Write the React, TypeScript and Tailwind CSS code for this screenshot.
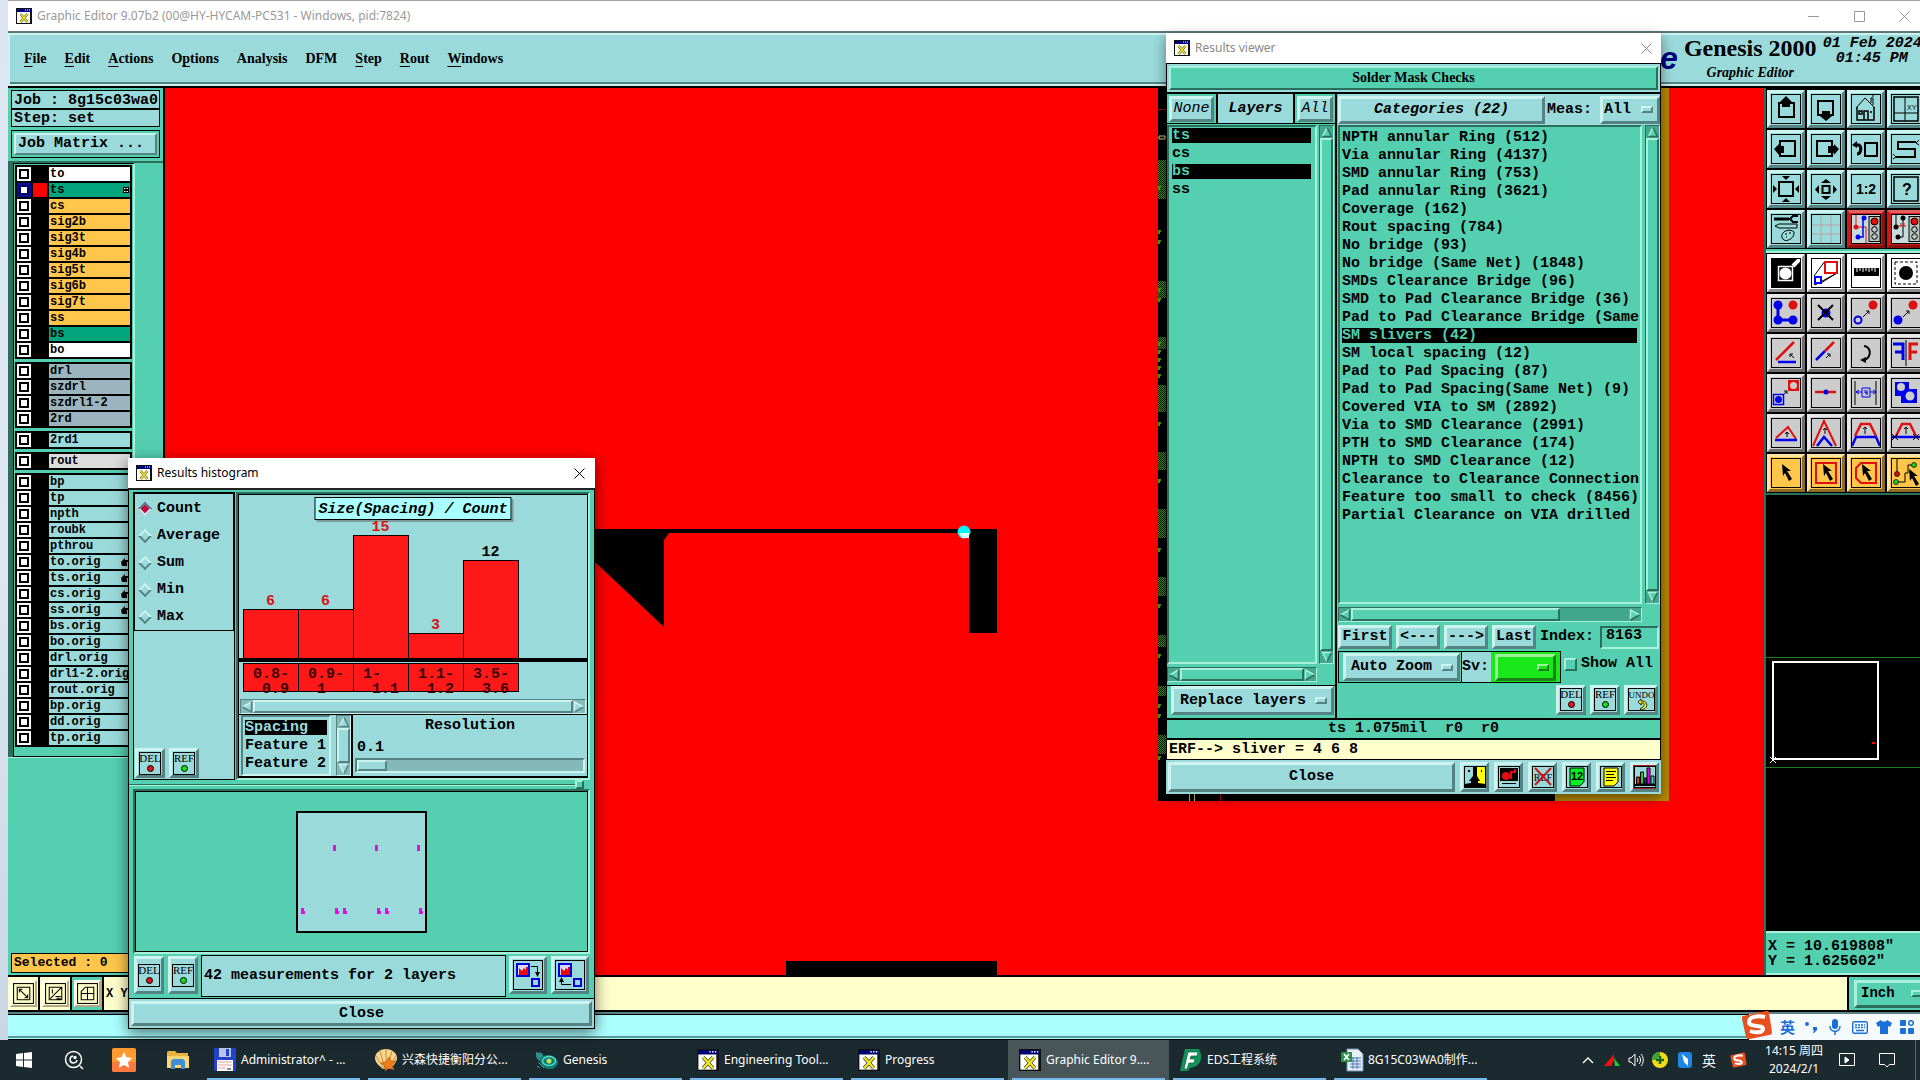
import React from "react";

const mono = "font-['Liberation_Mono',monospace] font-bold text-[15px] leading-[18px]";
const serif = "font-['Liberation_Serif',serif] font-bold text-[14px]";
const ui = "font-['Noto_Sans','Noto_Sans_CJK_SC',sans-serif] text-[12px]";

const cyanUp = "bg-[#9bdada] border-t-[#cdf3f1] border-l-[#cdf3f1] border-b-[#558384] border-r-[#558384]";
const tealUp = "bg-[#54cfb0] border-t-[#a8f0dc] border-l-[#a8f0dc] border-b-[#2c6e5c] border-r-[#2c6e5c]";
const cyanDown = "border-t-[#558384] border-l-[#558384] border-b-[#cdf3f1] border-r-[#cdf3f1]";
const tealDown = "border-t-[#2c6e5c] border-l-[#2c6e5c] border-b-[#a8f0dc] border-r-[#a8f0dc]";

function XIcon({ className = "size-4" }: { className?: string }) {
  return (
    <svg viewBox="0 0 16 16" className={className} aria-hidden="true">
      <rect width="16" height="16" fill="#111" />
      <rect x="1" y="1" width="14" height="3" fill="#00007f" />
      <path d="M9 2h1M11 2h1M13 2h1" stroke="#fff" />
      <rect x="1" y="4" width="13" height="11" fill="#fff" />
      <path d="M4.500 6l7 8M11.500 6l-7 8" stroke="#333" strokeWidth="2.600" />
      <path d="M4.500 6l7 8M11.500 6l-7 8" stroke="#f2ea1c" strokeWidth="1.700" />
    </svg>
  );
}

function Arrow({ dir, teal }: { dir: "l" | "r" | "u" | "d"; teal?: boolean }) {
  const lt = teal ? "#a8f0dc" : "#cdf3f1";
  const dk = teal ? "#2c6e5c" : "#558384";
  const fill = teal ? "#54cfb0" : "#9bdada";
  const shapes = {
    l: ["M10.500 1L1.500 6", "M1.500 6L10.500 11V1"],
    r: ["M10.500 6L1.500 1V11", "M1.500 11L10.500 6"],
    u: ["M1.500 10.500L6 1.500", "M6 1.500L10.500 10.500H1.500"],
    d: ["M6 10.500L1.500 1.500H10.500", "M10.500 1.500L6 10.500"],
  }[dir];
  const full = { l: "M10.500 1L1.500 6L10.500 11z", r: "M1.500 1L10.500 6L1.500 11z", u: "M6 1.500L10.500 10.500H1.500z", d: "M1.500 1.500H10.500L6 10.500z" }[dir];
  return (
    <svg viewBox="0 0 12 12" className="size-3 shrink-0" aria-hidden="true">
      <path d={full} fill={fill} />
      <path d={shapes[0]} stroke={lt} strokeWidth="1.500" fill="none" />
      <path d={shapes[1]} stroke={dk} strokeWidth="1.500" fill="none" />
    </svg>
  );
}

function HScroll({ teal, part }: { teal?: boolean; part?: boolean }) {
  return (
    <div className={`flex h-[15px] items-center border ${teal ? "bg-[#43a78e] " + tealDown : "bg-[#84b9b9] " + cyanDown}`}>
      <Arrow dir="l" teal={teal} />
      <div className="flex h-[13px] flex-1">
        <div className={`border-2 ${part ? "w-3/4" : "w-full"} ${teal ? tealUp : cyanUp}`} />
      </div>
      <Arrow dir="r" teal={teal} />
    </div>
  );
}

function VScroll({ teal }: { teal?: boolean }) {
  return (
    <div className={`flex w-[15px] shrink-0 flex-col items-center border ${teal ? "bg-[#43a78e] " + tealDown : "bg-[#84b9b9] " + cyanDown}`}>
      <Arrow dir="u" teal={teal} />
      <div className={`w-[13px] flex-1 border-2 ${teal ? tealUp : cyanUp}`} />
      <Arrow dir="d" teal={teal} />
    </div>
  );
}

function Btn({ children, className = "" }: { children: React.ReactNode; className?: string }) {
  return (
    <button type="button" className={`flex items-center justify-center border-[3px] ${cyanUp} ${className}`}>
      {children}
    </button>
  );
}

function Tag({ label, kind }: { label: string; kind: "del" | "ref" | "undo" }) {
  const w = kind === "undo" ? 27 : 22;
  return (
    <svg width={w} height="23" viewBox={`0 0 ${w} 23`} aria-hidden="true">
      <rect x="0.500" y="0.500" width={w - 1} height="22" fill="none" stroke="#000" />
      <text x={w / 2} y="10" textAnchor="middle" fontFamily="Liberation Serif" fontWeight="normal" fontSize={kind === "undo" ? 9 : 11}>{label}</text>
      {kind === "undo" ? (
        <path d="M13 11l-3 3 3 3v-2c3-1 4 2 2 4l-3 2 1 1c5-1 7-4 5-7-1-2-3-2-5-2z" fill="#f5ee20" stroke="#000" strokeWidth="0.800" />
      ) : (
        <circle cx={w / 2 + 0.500} cy="16.500" r="3" fill={kind === "del" ? "#e31414" : "#18e018"} stroke="#000" />
      )}
    </svg>
  );
}

function Option({ label, children, tone = cyanUp, className = "" }: { label: string; children?: string; tone?: string; className?: string }) {
  return (
    <div className={`flex items-center border-[3px] ${tone} ${className}`}>
      <select aria-label={label} className="min-w-0 flex-1 appearance-none bg-transparent outline-none">
        <option>{children}</option>
      </select>
      <span className={`mr-1 h-[7px] w-3 shrink-0 border-2 ${tone}`} />
    </div>
  );
}

/* ---------- main window ---------- */

const menus: [string, string, string][] = [
  ["", "F", "ile"], ["", "E", "dit"], ["", "A", "ctions"], ["O", "p", "tions"], ["Analysis", "", ""],
  ["DFM", "", ""], ["", "S", "tep"], ["", "R", "out"], ["", "W", "indows"],
];

type Layer = { n: string; c: string; sel?: boolean; hand?: boolean };
const W = "bg-white", G = "bg-[#02a57c]", O = "bg-[#ffc64b]", S = "bg-[#9bb4bd]", C = "bg-[#9bdada]";
const groups: Layer[][] = [
  [
    { n: "to", c: W }, { n: "ts", c: G, sel: true }, { n: "cs", c: O }, { n: "sig2b", c: O }, { n: "sig3t", c: O },
    { n: "sig4b", c: O }, { n: "sig5t", c: O }, { n: "sig6b", c: O }, { n: "sig7t", c: O }, { n: "ss", c: O },
    { n: "bs", c: G }, { n: "bo", c: W },
  ],
  [{ n: "drl", c: S }, { n: "szdrl", c: S }, { n: "szdrl1-2", c: S }, { n: "2rd", c: S }],
  [{ n: "2rd1", c: C }],
  [{ n: "rout", c: "bg-[#dcdcdc]" }],
  [
    { n: "bp", c: C }, { n: "tp", c: C }, { n: "npth", c: C }, { n: "roubk", c: C }, { n: "pthrou", c: C },
    { n: "to.orig", c: C, hand: true }, { n: "ts.orig", c: C, hand: true }, { n: "cs.orig", c: C, hand: true },
    { n: "ss.orig", c: C, hand: true }, { n: "bs.orig", c: C }, { n: "bo.orig", c: C }, { n: "drl.orig", c: C },
    { n: "drl1-2.orig", c: C }, { n: "rout.orig", c: C }, { n: "bp.orig", c: C }, { n: "dd.orig", c: C }, { n: "tp.orig", c: C },
  ],
];

function LayerRow({ l }: { l: Layer }) {
  return (
    <li className="flex h-[14px]">
      <button type="button" aria-label={`Display ${l.n}`} className={`flex w-[14px] items-center justify-center ${l.sel ? "bg-[#0a0a9c]" : "bg-white"}`}>
        <span className={`size-[10px] border-2 bg-white ${l.sel ? "border-[#000060]" : "border-black"}`} />
      </button>
      <span className={`mx-[2px] w-[14px] ${l.sel ? "bg-[#ff0000]" : "bg-black"}`} />
      <button type="button" className={`flex w-[81px] items-center overflow-hidden pl-px text-left font-['Liberation_Mono',monospace] text-[12px] leading-[14px] font-bold ${l.c}`}>
        <span>{l.n}</span>
        {l.sel && (
          <svg viewBox="0 0 6 6" className="mr-px ml-auto size-[6px] shrink-0"><rect width="6" height="6" /><path d="M1 1.500h1.500M3.500 1.500h1.500M1 4.500h1.500M3.500 4.500h1.500" stroke="#fff" /></svg>
        )}
        {l.hand && (
          <svg viewBox="0 0 9 8" className="ml-auto h-2 w-[9px] shrink-0"><path d="M0 4l4-4v2h5v2H6v4H1z" /></svg>
        )}
      </button>
    </li>
  );
}

function LeftPanel() {
  return (
    <aside className="flex w-[157px] shrink-0 flex-col border-r-2 border-black bg-[#54cfb0]">
      <div className={`mx-[3px] mt-[2px] ${mono}`}>
        <div className="h-[19px] border border-black bg-[#9bdada] pl-[2px] leading-[19px]">Job : 8g15c03wa0</div>
        <div className="h-[18px] border border-black bg-[#9bdada] pl-[2px] leading-[18px]">Step: set</div>
        <div className="mt-[3px] border border-black p-[2px]">
          <button type="button" className={`h-[22px] w-full border-2 pl-[2px] text-left leading-[16px] ${cyanUp}`}>Job Matrix ...</button>
        </div>
      </div>
      <div className="mt-[3px] flex border-t-2 border-l-[5px] border-[#2c6e5c]">
        <div className="border border-r-2 border-black border-r-[#a8f0dc] p-px pb-[9px]">
          <div className="flex flex-col gap-[3px]">
            {groups.map((g, i) => (
              <ul key={i} className="flex w-[117px] flex-col gap-[2px] bg-black p-[2px]">
                {g.map((l) => <LayerRow key={l.n} l={l} />)}
              </ul>
            ))}
          </div>
        </div>
      </div>
      <div className="h-px bg-[#a8f0dc]" />
      <div className="mx-[3px] mt-auto mb-[2px] h-5 border border-black bg-[#ffc64b] pl-[2px] font-['Liberation_Mono',monospace] text-[13px] leading-[17px] font-bold">Selected : 0</div>
    </aside>
  );
}

const weave: [number, number][] = [[72, 39], [193, 17], [249, 12], [297, 27], [364, 18], [421, 29], [489, 19], [547, 12], [598, 10], [647, 19]];
const marks = [98, 142, 152, 200, 210, 254, 262, 270, 278, 286, 334, 391, 460, 516, 566, 616, 626, 668];

function Canvas() {
  return (
    <main className="min-w-0 flex-1 overflow-hidden bg-[#ff0000]">
      <svg className="block size-full" aria-label="Board view">
        <defs>
          <pattern id="weave" width="2" height="2" patternUnits="userSpaceOnUse">
            <rect width="2" height="2" fill="#0a1c04" />
            <path d="M0 0h1v1H0zM1 1h1v1H1z" fill="#4c8a1c" />
          </pattern>
        </defs>
        <path d="M430 441h402v4H504l-5 7v87L430 474z" />
        <path d="M804 441h28v104h-28z" />
        <circle cx="799" cy="444" r="6.500" fill="#00f4f4" />
        <path d="M794 445h10v5h-7z" fill="#d8ffff" />
        <path d="M621 873h211v14H621z" />
        <path d="M993 0h511v713H993z" />
        <path d="M1496 0h8v713h-114v-9h106z" fill="#b58900" />
        {weave.map(([y, h]) => <rect key={y} x="993" y={y} width="8" height={h} fill="url(#weave)" />)}
        {marks.map((y) => <path key={y} d={`M993 ${y}h3v2h-1v2h-2z`} fill="#4c9a10" />)}
        <path d="M993 21.500h8" stroke="#a00" />
        <path d="M994 48h6v3h-6z" stroke="#d8d070" fill="none" />
        <path d="M1024.500 704v9M1029.500 704v9" stroke="#d8d070" />
        <path d="M1055.500 704v9" stroke="#b00" />
      </svg>
    </main>
  );
}

/* toolbar glyphs are drawn on a 30 x 30 grid */
const K = "#000", R = "#e01010", B = "#0000ee";
const p = (d: string, stroke = K, w = 2, fill = "none") => <path key={d + stroke} d={d} stroke={stroke} strokeWidth={w} fill={fill} />;
const f = (d: string, fill = K) => <path key={d + fill} d={d} fill={fill} />;
const arrowCur = (x: number, y: number) => <path d={`M${x} ${y}l9 7h-4l5 8-3 2-4-8-2 3z`} />;
const light = (wires: React.ReactNode) => (
  <>
    <rect x="1" y="1" width="28" height="28" fill="#c6dcdc" />
    {wires}
    <rect x="18" y="2.500" width="11" height="25" fill="#b8c4c0" stroke="#000" />
    <circle cx="23.500" cy="7.500" r="3.500" fill="#e01010" stroke="#000" />
    <circle cx="23.500" cy="15.500" r="2.800" fill="none" stroke="#000" />
    <circle cx="23.500" cy="22.500" r="2.800" fill="none" stroke="#000" />
  </>
);

const glyphs1: React.ReactNode[] = [
  <>{p("M8 9h15v14H8z")}{f("M15 2l6 6h-2v5h-8V8H9z")}</>,
  <>{p("M7 7h15v14H7z")}{f("M15 27l6-5h-2v-5h-8v5H9z")}</>,
  <>{p("M6 13v13h17V13M13 26v-9h4v9M8 17h3v3H8zM19 18h2", K, 1.500)}{p("M5 14L14 4l10 10M20 9V4h2v7M21 2h2", K, 1)}</>,
  <>{p("M3 3h24v24H3z", K, 1.500)}{p("M14 3v24M3 19h24", K, 1)}<text x="16" y="16" fontSize="7" fontFamily="Liberation Sans">XY</text></>,
  <>{p("M9 7h15v15H9z")}{f("M3 15l5-5v2h5v7H8v2z")}</>,
  <>{p("M6 7h15v15H6z")}{f("M28 15l-5-5v2h-6v7h6v2z")}</>,
  <>{p("M14 9h12v13H14z")}{p("M4 11h4c3 2 2 9-2 9", K, 3)}{f("M1 11l5-4v7z")}</>,
  <>{p("M25 8H7v7h17v8H5")}{p("M28 6l-3 3 3 2M2 20l3 3-3 2", K, 1)}</>,
  <>{p("M8 8h14v14H8z")}{f("M11 2h8l-4 4zM11 28h8l-4-4zM2 11v8l4-4zM28 11v8l-4-4z")}</>,
  <>{p("M11.500 12h7v7h-7z")}{f("M10 9h10l-5-4zM10 22h10l-5 4zM8 11v9l-4-4.500zM22 11v9l4-4.500z")}</>,
  <text x="15" y="20" textAnchor="middle" fontSize="14" fontWeight="bold" fontFamily="Liberation Sans">1:2</text>,
  <>{p("M3 3h24v24H3z", K, 1.500)}<text x="16" y="21" textAnchor="middle" fontSize="16" fontWeight="bold" fontFamily="Liberation Sans">?</text></>,
  <>{p("M3 5h15", K, 3)}{p("M27 2h-5l-3 3 3 3h5", K, 2)}{p("M4 12l4-2h18v4H8z", K, 1)}{p("M11 24c-2-7 8-10 12-6 1 6-7 10-10 8zM14 20h2M18 19h2M15 23h1", K, 1)}</>,
  <>{p("M10 1v28M20 1v28M1 11h28M1 20h28", "#b9a0a4", 1)}</>,
  light(<>{p("M5 1v12h10v16", R, 1)}{p("M12 4v19H7", B, 1.500)}<circle cx="5" cy="13" r="2.500" fill={R} /><circle cx="13" cy="4" r="2.500" fill={B} /><circle cx="7" cy="23" r="2.500" fill={B} /></>),
  light(<>{p("M5 1v12M12 4v19H7", K, 1)}{p("M7 12h8M10 9v3M13 9v3", R, 1)}<circle cx="5" cy="13" r="2.500" /><circle cx="12" cy="4" r="2.500" /><circle cx="7" cy="23" r="2.500" /></>),
];

const glyphs2: React.ReactNode[] = [
  <>{f("M1 1h28v28H1z")}{p("M22 8l7-7", "#fff", 4)}{p("M7.500 8.500h14v14h-14z", "#fff", 1.500)}<circle cx="14.500" cy="15.500" r="6" fill="#fff" /></>,
  <>{p("M3 18L14 3M3 25l1 2 22-12M10 25l16-10", K, 1)}{p("M14 4h12v11H14z", R, 2)}{p("M4 19h6v6H4z", B, 2)}</>,
  <>{f("M3 10h25v8H3z")}{p("M6 10v4M9 10v3M12 10v4M15 10v3M18 10v4M21 10v3M24 10v4", "#fff", 1)}</>,
  <><rect x="4" y="4" width="22" height="22" fill="none" stroke="#000" strokeDasharray="3 2" /><circle cx="15" cy="15" r="7" /></>,
  <>{p("M7 7v15h15", B, 3)}<circle cx="7" cy="7" r="4.500" fill={B} /><circle cx="7" cy="22" r="4.500" fill={B} /><circle cx="22" cy="22" r="4.500" fill={B} /><circle cx="22" cy="7" r="4.500" fill={R} /></>,
  <><circle cx="15" cy="15" r="4.500" fill={B} />{p("M7 7l15 15M22 7L7 22")}</>,
  <>{p("M12 19l6-6M15 13h3v3", K, 1)}<circle cx="7" cy="22" r="3.500" fill="none" stroke={B} strokeWidth="2" /><circle cx="22" cy="7" r="4.500" fill={R} /></>,
  <>{p("M12 19l6-6M15 13h3v3", K, 1)}<circle cx="7" cy="22" r="4.500" fill={B} /><circle cx="22" cy="7" r="4.500" fill={R} /></>,
  <>{p("M5 22L23 4", R, 2.500)}{p("M7 24h18", B, 2.500)}{p("M23 20l-4-4M19 19v-3h3", K, 1)}</>,
  <>{p("M5 22l9-9", B, 2.500)}{p("M14 13l9-9", R, 2.500)}{p("M15 20l4-4M16 16h3v3", K, 1)}</>,
  <>{p("M13 8c7 1 8 10 1 14", K, 2)}{f("M9 22l6-3v6z")}</>,
  <>{p("M15 2v26", K, 1)}{p("M2 6h10v16M4 14h8", B, 3)}{p("M27 6h-8v16M26 14h-7", R, 3)}</>,
  <>{p("M2.500 16.500h10v10h-10z", B, 1.500)}<circle cx="7.500" cy="21.500" r="3.500" fill={B} />{f("M17 2h11v11H17z", R)}<circle cx="22.500" cy="7.500" r="3.500" fill="#ccc" />{p("M12 17l4-4M13 13h3v3", K, 1)}</>,
  <>{p("M4 14h21", R, 2.500)}<circle cx="15" cy="14" r="2.500" fill={B} /></>,
  <>{p("M4 3v24M25 3v24", K, 1)}{p("M11 10h8v9h-8zM5 14h6M19 14h6M8 12l-3 2 3 2M22 12l3 2-3 2M14 12v3h3M16 12v5", B, 1)}</>,
  <>{f("M4 4h14v7h8v14H10v-7H4z", B)}<circle cx="10" cy="9" r="4" fill="#ccc" /><circle cx="19" cy="18" r="4.500" fill="#ccc" /></>,
  <>{p("M5 20L17 9l8 12", R, 2)}{p("M4 22h22", B, 2.500)}{p("M16 19v-5M14 16l2-2 2 2", K, 1)}</>,
  <>{p("M2 28L13 3l12 25", R, 2)}{p("M6 28l7-9 8 9", B, 2.500)}{p("M14 16v-6M12 12l2-2 2 2", K, 1)}</>,
  <>{p("M4 18l6-12h9l6 12", R, 2.500)}{p("M1 28l4-9h20l4 9", B, 2.500)}{p("M14 16V9M12 11l2-2 2 2", K, 1)}</>,
  <>{p("M5 18l6-12h8l6 12", R, 2.500)}{p("M0 19h30", B, 2.500)}{p("M15 16V9M13 11l2-2 2 2M1 16l6 6M7 16l-6 6M22 16l6 6M28 16l-6 6", K, 1)}</>,
  <>{arrowCur(11, 6)}</>,
  <>{p("M5 5h20v20H5z", R, 2)}{arrowCur(12, 6)}</>,
  <>{p("M10 5h15v20H10l-5-5V10z", R, 2)}{arrowCur(11, 6)}</>,
  <>{p("M6 1v14M6 24h8v-9h3v-8h6", K, 1)}<circle cx="6" cy="16" r="2.500" fill="#d01010" stroke="#000" strokeWidth="0.700" /><circle cx="5" cy="24" r="2.500" fill="#20d020" stroke="#000" strokeWidth="0.700" /><circle cx="23" cy="7" r="2.500" fill="#20d020" stroke="#000" strokeWidth="0.700" />{arrowCur(18, 11)}</>,
];

function Tools({ items, tone, name }: { items: React.ReactNode[]; tone: (i: number) => string; name: string }) {
  return (
    <div className="grid grid-cols-[repeat(4,38px)] gap-[2px] bg-black p-px">
      {items.map((g, i) => (
        <button key={i} type="button" aria-label={`${name} tool ${i + 1}`} className={`flex size-[38px] items-center justify-center border-[3px] ${tone(i)}`}>
          <svg viewBox="0 0 30 30" className="size-[30px]" aria-hidden="true">
            {g}
            <rect x="0.500" y="0.500" width="29" height="29" fill="none" stroke="#000" />
          </svg>
        </button>
      ))}
    </div>
  );
}

const redTone = "bg-[#d01818] border-t-[#e06060] border-l-[#d01818] border-b-[#8a1010] border-r-[#8a1010]";
const whiteTone = "bg-white border-t-white border-l-white border-b-[#8c8c8c] border-r-[#8c8c8c]";
const grayTone = "bg-[#cccccc] border-t-[#e8e8e8] border-l-[#e8e8e8] border-b-[#6e6e6e] border-r-[#6e6e6e]";
const orangeTone = "bg-[#ffc64b] border-t-[#ffe6a8] border-l-[#ffe6a8] border-b-[#8d6c26] border-r-[#8d6c26]";

function RightPanel() {
  return (
    <aside className="flex w-[156px] shrink-0 flex-col overflow-hidden border-l-2 border-[#2c6e5c] bg-black">
      <div className="border-b-2 border-[#54cfb0] pt-px"><Tools items={glyphs1} name="View" tone={(i) => (i >= 14 ? redTone : cyanUp)} /></div>
      <div className="border-y-2 border-[#2c6e5c] border-t-[#a8f0dc]">
        <Tools items={glyphs2} name="Edit" tone={(i) => (i < 4 ? whiteTone : i < 20 ? grayTone : orangeTone)} />
      </div>
      <div className="flex flex-1 flex-col pt-[161px]">
        <svg width="156" height="114" viewBox="0 0 156 114" aria-label="Overview">
          <path d="M0 1.500h156M0 111.500h156" stroke="#1d7a1d" />
          <path d="M7 6h105v97H7z" fill="none" stroke="#fff" strokeWidth="2" />
          <path d="M106 87h3" stroke="#f00" strokeWidth="2" />
          <path d="M4 101l6 6M10 101l-6 6" stroke="#fff" />
        </svg>
      </div>
      <div className="border-y-2 border-[#a8f0dc] bg-[#54cfb0] pt-[6px] pb-[4px] pl-[2px] font-['Liberation_Mono',monospace] text-[15px] leading-[15px] font-bold whitespace-pre">
        <div>X = 10.619808"</div>
        <div>Y = 1.625602"</div>
      </div>
    </aside>
  );
}

const snaps = ["M5 5h12v12H5zM7 7l8 8M7 10V7h3M15 12v3h-3", "M5 5h12v12H5zM6 16L17 5M8 7v4M11 14h5M12 16h4", "M5 9l4-4h8v12H5zM11 5v12M5 11h12"];

function MainWindow() {
  return (
    <div className="flex min-w-0 flex-1 flex-col border-t border-[#a0a0a0]">
      <header className={`flex h-[30px] shrink-0 items-center bg-white pl-2 text-[#999] ${ui}`}>
        <XIcon />
        <h1 className="ml-[5px] flex-1">Graphic Editor 9.07b2 (00@HY-HYCAM-PC531 - Windows, pid:7824)</h1>
        <div className="flex w-[112px] justify-between pr-[10px]">
          <button type="button" aria-label="Minimize"><svg viewBox="0 0 11 11" className="size-[11px]"><path d="M0 5.500h11" stroke="#999" /></svg></button>
          <button type="button" aria-label="Maximize"><svg viewBox="0 0 11 11" className="size-[11px]"><path d="M.5.5h10v10H.5z" stroke="#999" fill="none" /></svg></button>
          <button type="button" aria-label="Close window"><svg viewBox="0 0 11 11" className="size-[11px]"><path d="M.5.5l10 10M10.500.5l-10 10" stroke="#999" /></svg></button>
        </div>
      </header>
      <div className="flex h-[57px] shrink-0 overflow-hidden border-t-2 border-b-2 border-t-[#5b7778] border-b-black bg-[#9bdada] shadow-[inset_0_-2px_0_#cdf3f1,inset_2px_2px_0_#cdf3f1,inset_0_-4px_0_#558384]">
        <nav className={`flex flex-1 items-center gap-[18px] pb-[3px] pl-[16px] text-black ${serif}`}>
          {menus.map(([a, b, c]) => (
            <button type="button" key={a + b + c}>{a}<span className="underline underline-offset-[3px]">{b}</span>{c}</button>
          ))}
        </nav>
        <div className="flex w-[268px] shrink-0 gap-1 overflow-hidden pl-2 font-bold text-black">
          <span className="w-5 pt-[5px] text-[32px] leading-[40px] text-[#00007f] italic font-['Liberation_Sans',sans-serif]">e</span>
          <div className="w-[137px] shrink-0 pt-[2px] text-center font-['Liberation_Serif',serif]">
            <div className="text-[24px] leading-[26px] whitespace-nowrap">Genesis 2000</div>
            <div className="text-[14px] leading-[24px] italic">Graphic Editor</div>
          </div>
          <div className="pt-[3px] text-[15px] leading-[15px] whitespace-pre italic font-['Liberation_Mono',monospace]">
            <div>01 Feb 2024</div>
            <div className="pl-[13px]">01:45 PM</div>
          </div>
        </div>
      </div>
      <div className="flex min-h-0 flex-1">
        <LeftPanel />
        <Canvas />
        <RightPanel />
      </div>
      <div className="flex h-[37px] shrink-0 border-y-2 border-black bg-[#ffffcc]">
        {snaps.map((d, i) => (
          <button key={i} type="button" aria-label={`Snap mode ${i + 1}`} className={`flex w-8 items-center justify-center border-r-2 border-black ${i === 2 ? "bg-[#54cfb0]" : "bg-[#ffffcc]"}`}>
            <svg viewBox="0 0 22 22" className="size-[27px] border-2 border-t-[#fffff0] border-l-[#fffff0] border-r-[#b4a888] border-b-[#b4a888] bg-[#ffffcc]" fill="none" stroke="#000"><path d={d} /><rect x="1.500" y="1.500" width="19" height="19" /></svg>
          </button>
        ))}
        <label htmlFor="xy" className="flex items-center pl-[2px] text-[12px] font-bold font-['Liberation_Mono',monospace]">X Y :</label>
        <input id="xy" className="min-w-0 flex-1 bg-transparent outline-none" />
        <div className="flex w-[73px] items-center border-l-2 border-black bg-[#54cfb0] pl-[5px]">
          <Option label="Units" tone={tealUp} className="h-[28px] w-[76px] shrink-0 pl-1 text-[14px] font-bold font-['Liberation_Mono',monospace]">Inch</Option>
        </div>
      </div>
      <div className="h-[28px] shrink-0 border-t-2 border-b border-t-[#5b8283] border-b-black bg-[#aff]">
        <div className="h-[24px] border-t border-b-2 border-t-black border-b-[#5b9a9a]" />
      </div>
    </div>
  );
}

/* ---------- histogram window ---------- */

const bars = [
  { v: 6, a: "0.8-", b: "0.9" }, { v: 6, a: "0.9-", b: "1" }, { v: 15, a: "1-", b: "1.1" },
  { v: 3, a: "1.1-", b: "1.2" }, { v: 12, a: "3.5-", b: "3.6", dark: true },
];
const spots = [[35, 32], [77, 32], [119, 32], [3, 95], [37, 95], [45, 95], [79, 95], [87, 95], [121, 95]];

function SwapIcon({ down }: { down?: boolean }) {
  return (
    <svg viewBox="0 0 30 30" className="size-[30px]" aria-hidden="true">
      <rect x="0.500" y="0.500" width="29" height="29" fill="none" stroke="#000" />
      <rect x="4" y="4" width="12" height="12" fill="#d8d8ff" stroke="#0000dd" strokeWidth="2" />
      <path d="M6 15V8l3 3 2-3 2 2V7h2v8z" fill="#e00" />
      <rect x="19" y="19" width="7" height="7" fill="none" stroke="#0000dd" strokeWidth="2" />
      <path d={down ? "M18 6.500h6.500V13" : "M16 24.500H6.500V20"} fill="none" stroke="#000" />
      <path d={down ? "M22 12h5l-2.500 5z" : "M4 22h5l-2.500-5z"} />
    </svg>
  );
}

function HistogramWindow() {
  return (
    <section className={`absolute top-[458px] left-[128px] w-[467px] bg-[#54cfb0] text-black shadow-[0_4px_14px_rgba(0,0,0,0.55)] ${mono}`}>
      <header className={`flex h-[30px] items-center bg-white pr-[10px] pl-2 font-normal ${ui}`}>
        <XIcon />
        <h2 className="ml-[5px] flex-1 font-normal">Results histogram</h2>
        <button type="button" aria-label="Close histogram"><svg viewBox="0 0 11 11" className="size-[11px]"><path d="M.5.5l10 10M10.500.5l-10 10" stroke="#000" /></svg></button>
      </header>
      <div className="border border-t-2 border-black border-t-[#222]">
        <div className="flex h-[290px] gap-px px-1 pt-[2px]">
          <div className="flex w-[102px] flex-col border border-black bg-[#9bdada]">
            <fieldset className="flex h-[138px] flex-col border border-black pt-px">
              {["Count", "Average", "Sum", "Min", "Max"].map((t, i) => (
                <label key={t} className="flex h-[27px] items-center gap-[7px] pl-[5px]">
                  <input type="radio" name="stat" defaultChecked={i === 0} className="size-[10px] rotate-45 appearance-none border-2 border-t-[#cdf3f1] border-l-[#cdf3f1] border-r-[#558384] border-b-[#558384] checked:border-t-[#558384] checked:border-l-[#558384] checked:border-r-[#cdf3f1] checked:border-b-[#cdf3f1] checked:bg-[#c80046]" />
                  {t}
                </label>
              ))}
            </fieldset>
            <div className="mt-auto mb-px flex gap-1 pl-px">
              <Btn className="size-[30px]"><Tag kind="del" label="DEL" /></Btn>
              <Btn className="size-[30px]"><Tag kind="ref" label="REF" /></Btn>
            </div>
          </div>
          <div className="flex min-w-0 flex-1 flex-col border-2 border-t-[#2c6e5c] border-l-[#2c6e5c] border-r-[#a8f0dc] border-b-[#a8f0dc]">
            <div className="flex flex-1 flex-col border border-b-2 border-black bg-[#9bdada]">
              <div className="relative flex h-[163px] items-end pl-1">
                <h3 className="absolute top-[2px] left-1/2 -translate-x-1/2 border border-black bg-[#aff] px-[3px] pt-[3px] leading-[18px] whitespace-nowrap italic shadow-[2px_2px_0_#7a9c9c]">Size(Spacing) / Count</h3>
                {bars.map((b, i) => (
                  <div key={i} className={`relative w-[55px] text-center leading-[15px] ${b.dark ? "text-black" : "text-[#dd1414]"}`}>
                    {b.v}
                    <div className="-mr-px border border-b-0 border-black bg-[#ff1818]" style={{ height: b.v * 8.2 }} />
                  </div>
                ))}
              </div>
              <div className="h-1 shrink-0 bg-black" />
              <div className="mt-px flex h-[29px] pl-1 leading-[15px] text-[#3a0404]">
                {bars.map((b, i) => (
                  <div key={i} className="-mr-px w-[56px] border border-black bg-[#ff1818] pt-[3px] pl-[9px]">
                    <div>{b.a}</div>
                    <div className="pl-[9px]">{b.b}</div>
                  </div>
                ))}
              </div>
              <div className="mt-[7px] px-px"><HScroll /></div>
              <div className="flex flex-1 border-t border-black">
                <div className="flex pl-[2px]">
                  <ul className={`w-[90px] border-2 pt-[3px] pl-[2px] ${cyanDown}`}>
                    {["Spacing", "Feature 1", "Feature 2"].map((t, i) => (
                      <li key={t} className={`mb-[3px] h-[15px] w-[82px] leading-[15px] whitespace-nowrap ${i === 0 ? "bg-black text-[#9bdada]" : ""}`}>{t}</li>
                    ))}
                  </ul>
                  <div className="ml-[5px] flex"><VScroll /></div>
                </div>
                <div className="flex flex-1 flex-col border-l-2 border-black px-[2px] pb-px">
                  <label htmlFor="res" className="pt-[2px] text-center">Resolution</label>
                  <output className="mt-1 pl-[2px]">0.1</output>
                  <input id="res" type="range" min="0" max="10" defaultValue="0" className={`mt-px h-[15px] w-full appearance-none border-2 bg-[#84b9b9] ${cyanDown} [&::-webkit-slider-thumb]:h-[11px] [&::-webkit-slider-thumb]:w-[30px] [&::-webkit-slider-thumb]:appearance-none [&::-webkit-slider-thumb]:border-2 [&::-webkit-slider-thumb]:border-[#cdf3f1] [&::-webkit-slider-thumb]:border-r-[#558384] [&::-webkit-slider-thumb]:border-b-[#558384] [&::-webkit-slider-thumb]:bg-[#9bdada]`} />
                </div>
              </div>
            </div>
          </div>
        </div>
        <div className="flex h-[9px] items-center justify-end pr-[10px]">
          <div className="h-[2px] flex-1 border-y border-t-[#2c6e5c] border-b-[#a8f0dc]" />
          <div className={`size-[9px] border-2 ${tealUp}`} />
        </div>
        <div className="px-1">
          <div className={`border-2 ${tealDown}`}>
            <div className="flex h-[161px] items-center justify-center border border-black">
              <svg viewBox="0 0 127 118" className="h-[122px] w-[131px] border-2 border-black bg-[#9bdada]" aria-label="Measurement map">
                {spots.map(([x, y]) => <path key={`${x}-${y}`} d={y > 50 ? `M${x} ${y}h3v3h1v3h-4z` : `M${x} ${y}h3v6h-3z`} fill="#e010e0" />)}
              </svg>
            </div>
          </div>
        </div>
        <div className="flex h-[45px] items-start gap-1 border-b border-black px-[5px] pt-px">
          <Btn className="mt-px h-[38px] w-[30px] shrink-0"><Tag kind="del" label="DEL" /></Btn>
          <Btn className="mt-px h-[38px] w-[30px] shrink-0"><Tag kind="ref" label="REF" /></Btn>
          <div className="-mx-px flex h-[42px] flex-1 items-center border border-black bg-[#9bdada] pl-[2px]">42 measurements for 2 layers</div>
          <Btn className="mt-px size-[38px] shrink-0"><SwapIcon down /></Btn>
          <Btn className="mt-px size-[38px] shrink-0"><SwapIcon /></Btn>
        </div>
        <div className="bg-[#9bdada] p-[2px]"><Btn className="h-[25px] w-full">Close</Btn></div>
      </div>
    </section>
  );
}

/* ---------- results viewer ---------- */

const categories = [
  "NPTH annular Ring (512)", "Via annular Ring (4137)", "SMD annular Ring (753)", "Pad annular Ring (3621)", "Coverage (162)",
  "Rout spacing (784)", "No bridge (93)", "No bridge (Same Net) (1848)", "SMDs Clearance Bridge (96)", "SMD to Pad Clearance Bridge (36)",
  "Pad to Pad Clearance Bridge (Same", "SM slivers (42)", "SM local spacing (12)", "Pad to Pad Spacing (87)",
  "Pad to Pad Spacing(Same Net) (9)", "Covered VIA to SM (2892)", "Via to SMD Clearance (2991)", "PTH to SMD Clearance (174)",
  "NPTH to SMD Clearance (12)", "Clearance to Clearance Connection", "Feature too small to check (8456)", "Partial Clearance on VIA drilled",
];

function List({ items, on, label }: { items: string[]; on: string[]; label: string }) {
  return (
    <ul role="listbox" aria-label={label} className="flex flex-col gap-[3px]">
      {items.map((t) => (
        <li key={t} role="option" aria-selected={on.includes(t)} className={`h-[15px] leading-[15px] whitespace-nowrap ${on.includes(t) ? "bg-black text-[#54cfb0]" : ""}`}>{t}</li>
      ))}
    </ul>
  );
}

const footIcons: React.ReactNode[] = [
  <><rect width="22" height="22" fill="#9bdada" /><path d="M13 0h9v22h-9z" fill="#ff0" /><path d="M9 0h4v10l3 5h-2v2l8 1v4H0v-4l7-1v-2H5l4-5zM4 4h2v2H4zM17 4h1v2h-1z" /></>,
  <><path d="M2 2h18v13H2z" /><circle cx="8" cy="10" r="4" fill="#e01010" /><path d="M13 13V6h4V3" stroke="#e01010" strokeWidth="2" fill="none" /><path d="M4 17.500h14" stroke="#000" /></>,
  <><text x="11" y="15" textAnchor="middle" fontSize="10" fontWeight="normal" fontFamily="Liberation Serif">REF</text><path d="M3 2l16 17M19 2L3 19" stroke="#c81818" strokeWidth="2" /></>,
  <><path d="M4 2h14v14l-4 4H4z" fill="#00f020" stroke="#000" /><text x="11" y="14" textAnchor="middle" fontSize="11" fontWeight="bold" fontFamily="Liberation Sans">12</text></>,
  <><path d="M4 2h14v14l-4 4H4z" fill="#ff0" stroke="#000" /><path d="M6 5.500h10M6 8.500h8M6 11.500h10M6 14.500h7" stroke="#000" /></>,
  <><path d="M1 19h20" stroke="#000" strokeWidth="2" /><path d="M2.500 11h3v7h-3z" fill="#c33" stroke="#000" /><path d="M6.500 6h3v12h-3z" fill="#2c2" stroke="#000" /><path d="M10 12h3v6h-3z" fill="#22a" stroke="#000" /><path d="M13 2h3v16h-3z" fill="#e0e" stroke="#000" /><path d="M17 10h3v8h-3z" fill="#6cc" stroke="#000" /></>,
];

function ResultsWindow() {
  return (
    <section className={`absolute top-[33px] left-[1166px] w-[495px] bg-[#54cfb0] text-black shadow-[0_4px_12px_rgba(0,0,0,0.45)] ${mono}`}>
      <header className={`flex h-[30px] items-center bg-white pr-[9px] pl-2 font-normal text-[#888] ${ui}`}>
        <XIcon />
        <h2 className="ml-[5px] flex-1 font-normal">Results viewer</h2>
        <button type="button" aria-label="Close viewer"><svg viewBox="0 0 11 11" className="size-[11px]"><path d="M.5.5l10 10M10.500.5l-10 10" stroke="#888" /></svg></button>
      </header>
      <div className="border border-b-2 border-black bg-[#9bdada] p-[2px]">
        <h3 className={`border-2 text-center leading-[20px] ${tealUp} ${serif}`}>Solder Mask Checks</h3>
      </div>
      <div className="flex h-[624px] border-x border-black">
        <div className="flex w-[170px] flex-col border-r-2 border-black">
          <div className="flex h-[30px] shrink-0 border-b border-black leading-[20px]">
            <div className="p-[2px]"><Btn className="h-[26px] w-[45px] font-normal italic">None</Btn></div>
            <div className="flex flex-1 items-center justify-center border-x-2 border-black bg-[#9bdada] italic">Layers</div>
            <div className="p-[2px]"><Btn className="h-[26px] w-[36px] font-normal italic">All</Btn></div>
          </div>
          <div className="flex min-h-0 flex-1 justify-between pt-px pr-px">
            <div className={`w-[150px] border-2 pt-px pr-1 pl-[3px] ${tealDown}`}>
              <List label="Layers" items={["ts", "cs", "bs", "ss"]} on={["ts", "bs"]} />
            </div>
            <VScroll teal />
          </div>
          <div className="my-[3px] w-[150px]"><HScroll teal /></div>
          <div className="h-[33px] border-t border-black pl-1">
            <Option label="Replace mode" className="h-[29px] w-[163px] pl-[6px]">Replace layers</Option>
          </div>
        </div>
        <div className="flex min-w-0 flex-1 flex-col pl-px">
          <div className="flex h-[31px] shrink-0 items-center bg-[#9bdada]">
            <Btn className="h-[28px] w-[207px] italic">Categories (22)</Btn>
            <label className="flex-1 pl-[2px]">Meas:</label>
            <Option label="Measurements" className="h-[28px] w-[60px] pl-px">All</Option>
          </div>
          <div className="flex min-h-0 flex-1 justify-between">
            <div className={`w-[304px] overflow-hidden border-2 pt-[3px] pr-[3px] pl-[2px] ${tealDown}`}>
              <List label="Categories" items={categories} on={["SM slivers (42)"]} />
            </div>
            <VScroll teal />
          </div>
          <div className="my-[3px] w-[304px]"><HScroll teal part /></div>
          <div className="flex h-[24px] shrink-0 items-center gap-1">
            <Btn className="h-6 w-[54px]">First</Btn>
            <Btn className="h-6 w-[44px]">&lt;---</Btn>
            <Btn className="h-6 w-[44px]">---&gt;</Btn>
            <Btn className="h-6 w-[44px]">Last</Btn>
            <label htmlFor="idx">Index:</label>
            <input id="idx" defaultValue="8163" className={`ml-[2px] h-[23px] w-[59px] border-2 bg-transparent pb-[4px] pl-1 outline-none ${tealDown}`} />
          </div>
          <div className="mt-[2px] flex h-8 shrink-0 items-center">
            <div className="flex h-8 items-center border border-black">
              <Option label="Zoom mode" className="ml-1 h-[28px] w-[117px] pl-[5px]">Auto Zoom</Option>
              <span className="ml-px flex h-full items-center border-l border-black bg-[#9bdada] pr-[2px]">Sv:</span>
              <span className="flex h-full items-center bg-[#1be81b] px-1">
                <Option label="Severity" className="h-[27px] w-[61px]" tone="bg-[#1be81b] border-t-[#a0f0a0] border-l-[#a0f0a0] border-b-[#1a801a] border-r-[#1a801a]"> </Option>
              </span>
            </div>
            <label className="ml-[3px] flex items-center gap-1 pb-[6px]">
              <input type="checkbox" className={`size-[13px] appearance-none border-2 ${tealUp}`} />
              Show All
            </label>
          </div>
          <div className="flex h-[35px] shrink-0 items-center justify-end gap-1 pr-[2px] pb-[2px]">
            <Btn className="size-[30px]"><Tag kind="del" label="DEL" /></Btn>
            <Btn className="size-[30px]"><Tag kind="ref" label="REF" /></Btn>
            <Btn className="h-[30px] w-[34px]"><Tag kind="undo" label="UNDO" /></Btn>
          </div>
        </div>
      </div>
      <div className="h-[22px] border border-y-2 border-black text-center whitespace-pre">ts 1.075mil  r0  r0</div>
      <div className="h-[20px] border border-t-0 border-black bg-[#ffffcc] pl-[2px] leading-[20px]">ERF--&gt; sliver = 4 6 8</div>
      <div className="flex items-center gap-[5px] bg-[#9bdada] p-[2px]">
        <Btn className="h-[30px] flex-1">Close</Btn>
        {footIcons.map((g, i) => (
          <Btn key={i} className={`h-[30px] w-[29px] ${i === 5 ? "!bg-[#b02020]" : ""}`}>
            <svg viewBox="0 0 22 22" className="size-[22px] shrink-0 bg-[#9bdada]" aria-hidden="true">{g}<rect x="0.500" y="0.500" width="21" height="21" fill="none" stroke="#000" /></svg>
          </Btn>
        ))}
      </div>
    </section>
  );
}

/* ---------- desktop shell ---------- */

const floppy = <svg viewBox="0 0 24 24" className="size-6"><path d="M1 0h21l1 1v22H2l-1-1z" fill="#2343c8" /><path d="M6 0h12v9H6z" fill="#b9c6e8" /><path d="M13 1h3v7h-3z" fill="#2343c8" /><path d="M4 12h16v11H4z" fill="#fff" /><path d="M5 14h14M5 17h14M5 20h8" stroke="#e7a0a0" /><path d="M14 20h4v2h-4z" fill="#888" /></svg>;
const shell = <svg viewBox="0 0 24 24" className="size-6"><path d="M12 1c6 0 11 4 11 9 0 4-4 8-7 11H9C5 18 1 14 1 10c0-5 5-9 11-9z" fill="#f8d890" /><path d="M12 1v20M6 3l5 18M18 3l-5 18M2 8l8 13M22 8l-8 13" stroke="#c98a35" /><path d="M15 9l2 4 5 0-4 4 2 5-5-2-4 3 0-5-4-3 5-1z" fill="#f07c1c" stroke="#a84d0a" strokeWidth="0.600" /></svg>;
const gen = <svg viewBox="0 0 24 20" className="h-5 w-6"><path d="M1 2l6 1 2 5-5 3-3-4z" fill="#2f8f8a" /><ellipse cx="14" cy="12" rx="9" ry="7" fill="#177" transform="rotate(12 14 12)" /><ellipse cx="14" cy="11" rx="6.500" ry="4.500" fill="none" stroke="#4fe0c0" strokeWidth="1.500" /><circle cx="14" cy="11" r="2.500" fill="#bfe24a" /><path d="M3 12l6 6M2 16l3 2" stroke="#59a" /></svg>;
const eds = <svg viewBox="0 0 24 24" className="size-6"><path d="M6 1h14c5 9 1 18-9 19l-2 3H1z" fill="#12925c" /><path d="M9 4h10l-1 4h-6l-1 3h5l-1 4h-5l-2 6H5z" fill="#fff" stroke="#0b5b3a" strokeWidth="0.700" /></svg>;
const xls = <svg viewBox="0 0 24 24" className="size-6"><path d="M7 1h11l5 5v17H7z" fill="#e8eef6" stroke="#7590b5" /><path d="M10 10h11M10 13h11M10 16h11M10 19h11M13 9v12M17 9v12" stroke="#4f78b8" /><path d="M1 4h11v10H1z" fill="#2c9146" /><path d="M4 6l5 6M9 6l-5 6" stroke="#fff" strokeWidth="1.700" /></svg>;

const tasks: { t: string; icon: React.ReactNode; on?: boolean }[] = [
  { t: "Administrator^ - ...", icon: floppy },
  { t: "兴森快捷衡阳分公...", icon: shell },
  { t: "Genesis", icon: gen },
  { t: "Engineering Tool...", icon: <XIcon className="size-[22px]" /> },
  { t: "Progress", icon: <XIcon className="size-[22px]" /> },
  { t: "Graphic Editor 9....", icon: <XIcon className="size-[22px]" />, on: true },
  { t: "EDS工程系统", icon: eds },
  { t: "8G15C03WA0制作...", icon: xls },
];

function SogouS({ className = "" }: { className?: string }) {
  return (
    <svg viewBox="0 0 32 30" className={className} aria-hidden="true">
      <path d="M2 6L25 1c2 0 3 0 3 2l3 19c0 2-1 3-3 3L9 29c-2 0-3 0-4-2L1 9c0-2 0-3 1-3z" fill="#e8501e" />
      <path d="M24 7C16 5 8 7 8 12c0 6 14 2 14 7 0 4-8 4-13 2" fill="none" stroke="#fff" strokeWidth="4" />
    </svg>
  );
}

function Taskbar() {
  return (
    <footer className={`flex h-10 shrink-0 items-stretch bg-[#1b2a2f] text-white ${ui}`}>
      <div className="flex w-[203px] items-center">
        <button type="button" aria-label="Start" className="ml-4"><svg viewBox="0 0 16 16" className="size-4" fill="#fff"><path d="M0 2l7-1v6.500H0zM8 1l8-1v7.500H8zM0 8.500h7V15l-7-1zM8 8.500h8V16l-8-1z" /></svg></button>
        <button type="button" aria-label="Search" className="ml-8"><svg viewBox="0 0 20 20" className="size-5" fill="none" stroke="#fff" strokeWidth="1.500"><circle cx="9.500" cy="9.500" r="8" /><path d="M16 16l3 3" /><path d="M9 6a3.500 3.500 0 1 0 4 4" /><circle cx="11" cy="7.500" r="1" fill="#fff" /></svg></button>
        <button type="button" aria-label="Favorites" className="ml-7"><svg viewBox="0 0 24 24" className="size-6"><rect width="24" height="24" rx="2" fill="#ff9a2e" /><path d="M0 14h24v8a2 2 0 0 1-2 2H2a2 2 0 0 1-2-2z" fill="#ff7a3d" /><path d="M12 4l2.500 5.300 5.800.7-4.300 4 1.100 5.800L12 17l-5.100 2.800L8 14 3.700 10l5.800-.7z" fill="#fff" /></svg></button>
        <button type="button" aria-label="File Explorer" className="ml-[31px]"><svg viewBox="0 0 22 20" className="h-5 w-[22px]"><path d="M0 2l1-1h7l2 2h11v15H0z" fill="#e8b33c" /><path d="M0 6h22v12H0z" fill="#fbd873" /><path d="M4 11l2-2h10l2 2v8h-4v-4H8v4H4z" fill="#3f8fd8" /></svg></button>
      </div>
      {tasks.map((k) => (
        <button type="button" key={k.t} className={`flex w-[161px] shrink-0 px-1 ${k.on ? "bg-[#48565a]" : ""}`}>
          <span className="flex h-10 w-full items-center gap-1 overflow-hidden border-b-2 border-[#76b9ed] pt-[2px] pl-[6px] whitespace-nowrap">
            <span className="flex w-6 shrink-0 justify-center">{k.icon}</span>
            {k.t}
          </span>
        </button>
      ))}
      <div className="flex flex-1 items-center justify-end">
        <svg viewBox="0 0 12 8" className="mr-[10px] h-2 w-3"><path d="M1 7l5-5 5 5" fill="none" stroke="#fff" strokeWidth="1.300" /></svg>
        <svg viewBox="0 0 16 12" className="mr-2 h-3 w-4"><path d="M0 12L10 0v6L7 12z" fill="#f01010" /><path d="M10 4l6 8h-5z" fill="#18d038" /></svg>
        <svg viewBox="0 0 16 14" className="mr-2 h-[14px] w-4" fill="none" stroke="#fff"><path d="M1 5h2l4-4v12L3 9H1zM9 5c1 1 1 3 0 4M11 3c2 2 2 6 0 8M13 1c3 3 3 9 0 12" /></svg>
        <svg viewBox="0 0 16 16" className="mr-[10px] size-4"><circle cx="8" cy="8" r="8" fill="#f2dc18" /><path d="M0 8a8 8 0 0 1 8-8v4l-4 4z" fill="#3aa53a" /><path d="M8 4v8M4 8h8" stroke="#186818" strokeWidth="2.500" /></svg>
        <svg viewBox="0 0 14 16" className="mr-[10px] h-4 w-[14px]"><rect width="14" height="16" rx="3" fill="#1c87e8" /><path d="M4 2l6 5v7L6 10z" fill="#fff" /></svg>
        <span className="mr-[14px] text-[14px]">英</span>
        <SogouS className="mr-4 h-4 w-[17px]" />
        <div className="mr-[14px] w-[62px] text-center leading-[18px] whitespace-nowrap"><div>14:15 周四</div><div>2024/2/1</div></div>
        <svg viewBox="0 0 16 16" className="mr-6 size-4" fill="none" stroke="#fff"><path d="M.5 1.500h15v12H.5z" /><path d="M6 5l4 3-4 3z" fill="#fff" /></svg>
        <svg viewBox="0 0 16 16" className="mr-5 size-4" fill="none" stroke="#fff"><path d="M.5 1.500h15v11h-5L8 15l-2.500-2.500h-5z" /></svg>
        <span className="mr-1 h-full w-px bg-[#5b686c]" />
      </div>
    </footer>
  );
}

function ImeBar() {
  return (
    <div className={`absolute right-0 bottom-10 flex h-[26px] items-center bg-[#f4fafd] pr-[6px] pl-[31px] text-[#1a6fd8] ${ui}`}>
      <SogouS className="absolute bottom-0 -left-2 h-[30px] w-8" />
      <span className="w-[24px] text-[15px] font-bold">英</span>
      <svg viewBox="0 0 14 14" className="mr-[10px] size-[14px]" fill="#1a6fd8"><circle cx="3" cy="4" r="2" /><path d="M9 7h4v3l-3 3H9l1-3H9z" /></svg>
      <svg viewBox="0 0 14 16" className="mr-[10px] h-4 w-[14px]"><rect x="4" y="0" width="6" height="10" rx="3" fill="#1a6fd8" /><path d="M2 7c0 7 10 7 10 0M7 12v4" fill="none" stroke="#1a6fd8" strokeWidth="1.500" /></svg>
      <svg viewBox="0 0 16 13" className="mr-2 h-[13px] w-4"><rect x="0.700" y="0.700" width="14.600" height="11.600" rx="1.500" fill="none" stroke="#1a6fd8" strokeWidth="1.400" /><path d="M3 4h10M3 6.500h10" stroke="#1a6fd8" strokeWidth="1.500" strokeDasharray="2 1" /><path d="M4 9.500h8" stroke="#1a6fd8" strokeWidth="1.500" /></svg>
      <svg viewBox="0 0 16 14" className="mr-2 h-[14px] w-4" fill="#1a6fd8"><path d="M5 0c1 2 5 2 6 0l5 3-2 4-2-1v8H4V6L2 7 0 3z" /></svg>
      <svg viewBox="0 0 14 14" className="size-[14px]" fill="#1a6fd8"><rect width="6" height="6" rx="1" /><circle cx="11" cy="3" r="2.300" fill="none" stroke="#1a6fd8" strokeWidth="1.500" /><rect y="8" width="6" height="6" rx="1" /><rect x="8" y="8" width="6" height="6" rx="1" /></svg>
    </div>
  );
}

export default function App() {
  return (
    <div className="relative flex min-h-screen w-full flex-col overflow-hidden bg-[#54cfb0]">
      <div className="flex min-h-0 flex-1">
        <div className="w-2 shrink-0 bg-gradient-to-b from-[#dbe6f2] via-[#dfe8f3] to-[#c9d6e4]" />
        <MainWindow />
      </div>
      <HistogramWindow />
      <ResultsWindow />
      <ImeBar />
      <Taskbar />
    </div>
  );
}
